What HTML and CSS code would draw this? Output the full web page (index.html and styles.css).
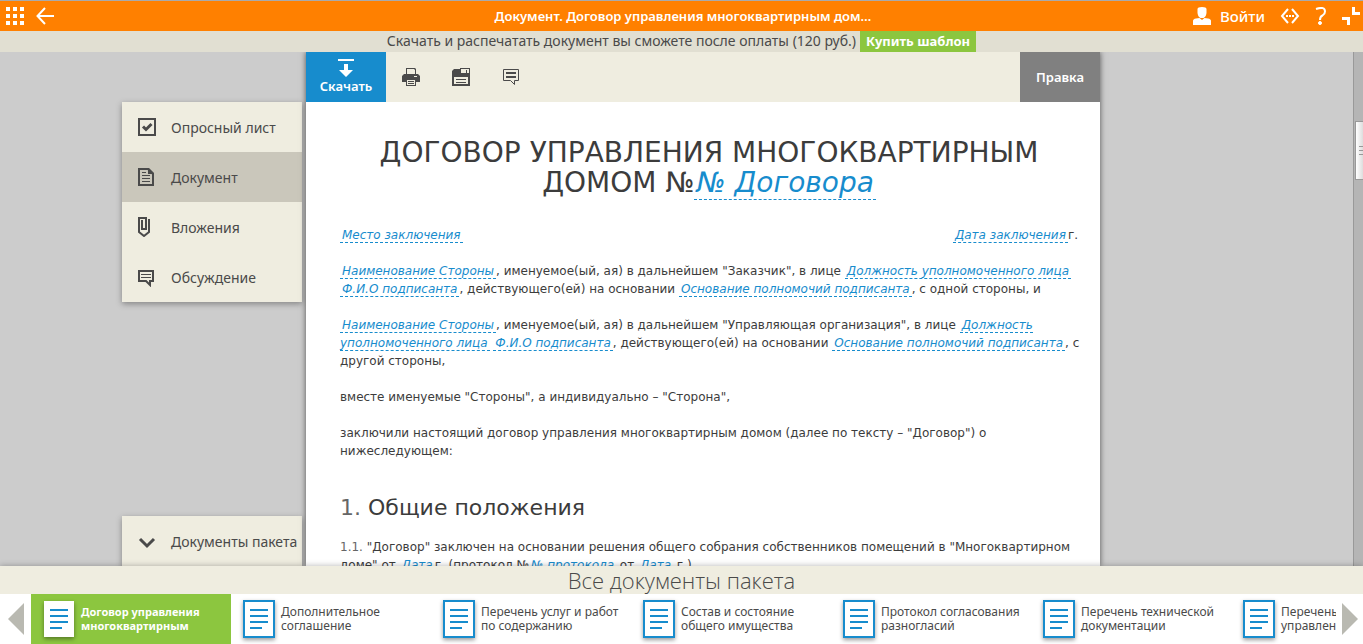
FILE: index.html
```html
<!DOCTYPE html>
<html lang="ru">
<head>
<meta charset="utf-8">
<meta name="viewport" content="width=device-width, initial-scale=1">
<title>Документ. Договор управления многоквартирным домом</title>
<link rel="stylesheet" href="styles.css">
</head>
<body>
<svg class="sprite" aria-hidden="true">
  <symbol id="sheet" viewBox="0 0 32 38">
    <path fill="#fff" stroke="currentColor" stroke-width="2" d="M1 1h30v36H1z"/>
    <path fill="none" stroke="#178ccd" stroke-width="2" d="M7 10h18M7 16h18M7 22h18M7 28h12"/>
  </symbol>
  <symbol id="sheet-plain" viewBox="0 0 32 38">
    <path fill="#fff" d="M1 1h30v36H1z"/>
    <path fill="none" stroke="#178ccd" stroke-width="2" d="M7 10h18M7 16h18M7 22h18M7 28h12"/>
  </symbol>
</svg>

<header class="topbar">
  <div class="topbar-side">
    <button class="icon-btn" type="button" aria-label="Меню">
      <svg width="18" height="18" fill="#fff"><path d="M0 0h4v4H0zM7 0h4v4H7zM14 0h4v4h-4zM0 7h4v4H0zM7 7h4v4H7zM14 7h4v4h-4zM0 14h4v4H0zM7 14h4v4H7zM14 14h4v4h-4z"/></svg>
    </button>
    <button class="icon-btn" type="button" aria-label="Назад">
      <svg width="18" height="18" fill="none" stroke="#fff" stroke-width="2"><path d="M18 9H2M9 1L1.500 9L9 17"/></svg>
    </button>
  </div>
  <h1 class="topbar-title">Документ. Договор управления многоквартирным дом…</h1>
  <div class="topbar-side topbar-right">
    <a class="login" href="#login">
      <svg width="18" height="18" fill="#fff"><path d="M4.500 2Q4.500 0 9 0t4.500 2v4q-.5 4-3 5h-3q-2.500-1-3-5zM0 14q0-2 3-2.500L6.500 11 9 13l2.500-2 3.500.5q3 .5 3 2.500v4H0z"/></svg>
      Войти
    </a>
    <button class="icon-btn" type="button" aria-label="Код">
      <svg width="20" height="18" fill="none" stroke="#fff" stroke-width="2"><path d="M8 2L2 9l6 7M12 2l6 7-6 7"/><path d="M6 9h2M9 9h2M12 9h2"/></svg>
    </button>
    <button class="icon-btn" type="button" aria-label="Помощь">
      <svg width="12" height="18" fill="none" stroke="#fff" stroke-width="2"><path d="M1 2q9-3 9 2.500Q10 7 7.500 8.500 5 9.500 5 13"/><circle cx="5" cy="16" r="1.500" fill="#fff" stroke-width="1"/></svg>
    </button>
    <button class="icon-btn" type="button" aria-label="Свернуть">
      <svg width="18" height="18" fill="#fff"><path d="M10 0h3v5h5v3h-8zM0 10h8v8H5v-5H0z"/></svg>
    </button>
  </div>
</header>

<div class="notice">
  <span>Скачать и распечатать документ вы сможете после оплаты (120 руб.)</span>
  <a class="buy" href="#buy">Купить шаблон</a>
</div>

<main class="workspace">
  <aside class="sidebar">
    <nav class="side-menu">
      <a href="#survey"><svg class="side-icon" viewBox="0 0 18 20" fill="none" stroke="#4a4a4a" stroke-width="2"><path d="M1 2h16v16H1z"/><path stroke-width="3" d="M5 9.500l3 3 5.500-5.500"/></svg>Опросный лист</a>
      <a class="active" href="#document"><svg class="side-icon" viewBox="0 0 18 20" fill="none" stroke="#4a4a4a" stroke-width="2"><path d="M1 2h9l5 5v11H1z"/><path fill="#4a4a4a" stroke="none" d="M10 1h1l5 5v1h-6z"/><path stroke-width="1" d="M4 5.500h4M4 8.500h8M4 11.500h8M4 14.500h8"/></svg>Документ</a>
      <a href="#attachments"><svg class="side-icon" viewBox="0 0 18 20" fill="none" stroke="#4a4a4a" stroke-width="2"><path d="M11 2v13l-5 4-5-4V1h7v11H4V3"/></svg>Вложения</a>
      <a href="#discussion"><svg class="side-icon" viewBox="0 0 18 20" fill="none" stroke="#4a4a4a" stroke-width="2"><path d="M1 4h14v10h-3v4l-4-4H1z"/><path stroke-width="1" d="M3 7.500h10M3 10.500h10"/></svg>Обсуждение</a>
    </nav>
    <button class="package-toggle" type="button"><svg class="side-icon" viewBox="0 0 18 20" fill="none" stroke="#4a4a4a" stroke-width="3"><path d="M2 8l7 7 7-7"/></svg>Документы пакета</button>
  </aside>

  <section class="page">
    <div class="toolbar">
      <button class="download" type="button">
        <svg width="16" height="18" fill="#fff"><path d="M0 0h16v2H0zM6 5h4v6h5l-7 7-7-7h5z"/></svg>
        Скачать
      </button>
      <button class="tool" type="button" aria-label="Печать">
        <svg width="18" height="18" fill="#4a4a4a"><path fill-rule="evenodd" d="M4 0h9l1 1v5h2l2 2v6h-4v4H4v-4H0V8l2-2h2zM5 1v5h8V2l-1-1zM5 12v5h8v-5zM12 8v1h3V8z"/><path d="M6 13h6v1H6zM6 15h6v1H6z"/></svg>
      </button>
      <button class="tool" type="button" aria-label="Сохранить">
        <svg width="18" height="18" fill="#4a4a4a"><path fill-rule="evenodd" d="M2 1h6V0h10v18H0V3zM9 1v4h8V1zM2 9v7h14V9z"/><path d="M14 2h1v3h-1zM4 11h10v1H4zM4 14h10v1H4z"/></svg>
      </button>
      <button class="tool" type="button" aria-label="Комментарий">
        <svg width="16" height="18" fill="none" stroke="#4a4a4a"><path d="M.5 1.500h15v11h-4v4l-4-4h-7z"/><path stroke-width="2" d="M3 5h10M3 9h10"/></svg>
      </button>
      <button class="edit" type="button">Правка</button>
    </div>

    <article class="doc">
      <h2 class="doc-title">ДОГОВОР УПРАВЛЕНИЯ МНОГОКВАРТИРНЫМ ДОМОМ №<a href="#f">№ Договора</a></h2>
      <div class="doc-row"><span><a href="#f">Место заключения</a></span><span><a href="#f">Дата заключения</a>г.</span></div>
      <p><a href="#f">Наименование Стороны</a>, именуемое(ый, ая) в дальнейшем "Заказчик", в лице <a href="#f">Должность уполномоченного лица</a><br><a href="#f">Ф.И.О подписанта</a>, действующего(ей) на основании <a href="#f">Основание полномочий подписанта</a>, с одной стороны, и</p>
      <p><a href="#f">Наименование Стороны</a>, именуемое(ый, ая) в дальнейшем "Управляющая организация", в лице <a href="#f">Должность<br>уполномоченного лица</a> <a href="#f">Ф.И.О подписанта</a>, действующего(ей) на основании <a href="#f">Основание полномочий подписанта</a>, с<br>другой стороны,</p>
      <p>вместе именуемые "Стороны", а индивидуально – "Сторона",</p>
      <p>заключили настоящий договор управления многоквартирным домом (далее по тексту – "Договор") о<br>нижеследующем:</p>
      <h3 class="doc-heading"><span class="num">1.</span> Общие положения</h3>
      <p><span class="num">1.1.</span> "Договор" заключен на основании решения общего собрания собственников помещений в "Многоквартирном<br>доме" от <a href="#f">Дата</a>г. (протокол №<a href="#f">№ протокола</a> от <a href="#f">Дата</a> г.)</p>
    </article>
  </section>

  <div class="rail"><div class="thumb"></div></div>
</main>

<footer class="package">
  <h2 class="package-title">Все документы пакета</h2>
  <div class="carousel">
    <button class="arrow" type="button" aria-label="Предыдущие"><svg width="16" height="32" fill="#b9b9b1"><path d="M16 0v32L0 16z"/></svg></button>
    <div class="cards">
      <a class="card current" href="#d1"><svg class="sheet"><use href="#sheet-plain"/></svg><span>Договор управления<br>многоквартирным</span></a>
      <a class="card" href="#d2"><svg class="sheet"><use href="#sheet"/></svg><span>Дополнительное<br>соглашение</span></a>
      <a class="card" href="#d3"><svg class="sheet"><use href="#sheet"/></svg><span>Перечень услуг и работ<br>по содержанию</span></a>
      <a class="card" href="#d4"><svg class="sheet"><use href="#sheet"/></svg><span>Состав и состояние<br>общего имущества</span></a>
      <a class="card" href="#d5"><svg class="sheet"><use href="#sheet"/></svg><span>Протокол согласования<br>разногласий</span></a>
      <a class="card" href="#d6"><svg class="sheet"><use href="#sheet"/></svg><span>Перечень технической<br>документации</span></a>
      <a class="card" href="#d7"><svg class="sheet"><use href="#sheet"/></svg><span>Перечень<br>управления</span></a>
    </div>
    <button class="arrow" type="button" aria-label="Следующие"><svg width="16" height="32" fill="#b9b9b1"><path d="M0 0v32l16-16z"/></svg></button>
  </div>
</footer>
</body>
</html>
```
FILE: styles.css
```css
* { box-sizing: border-box; }

body {
  margin: 0;
  height: 100vh;
  display: flex;
  flex-direction: column;
  overflow: hidden;
  background: #ccc;
  color: #4a4a4a;
  font-family: "Noto Sans", "Open Sans", sans-serif;
  font-size: 14px;
}

h1, h2, h3, p { margin: 0; font-weight: 400; }
a { color: inherit; text-decoration: none; }
button {
  margin: 0;
  padding: 0;
  border: 0;
  background: none;
  color: inherit;
  font: inherit;
  cursor: pointer;
}
svg { display: block; flex: none; }
.sprite { position: absolute; width: 0; height: 0; }

.topbar {
  flex: none;
  display: grid;
  grid-template-columns: 1fr auto 1fr;
  align-items: center;
  height: 31px;
  padding: 0 3px 0 6px;
  border-top: 1px solid #aaa;
  background: #ff8000;
  color: #fff;
}
.topbar-side { display: flex; align-items: center; gap: 12px; }
.topbar-right { justify-content: flex-end; gap: 15px; }
.topbar-title { font-size: 13px; font-weight: 600; }
.login { display: flex; align-items: center; gap: 9px; font-size: 15px; font-weight: 500; }

.notice {
  flex: none;
  display: flex;
  justify-content: center;
  gap: 4px;
  height: 21px;
  background: #e1dfd2;
  line-height: 20px;
}
.buy { padding: 0 6px; background: #8cc63f; color: #fff; font-size: 13px; font-weight: 700; }

.workspace {
  flex: 1;
  min-height: 0;
  display: grid;
  grid-template-columns: minmax(0, 122fr) 180px 4px minmax(0, 794px) minmax(0, 253fr) 10px;
  grid-template-rows: minmax(0, 1fr);
  overflow: hidden;
}

.sidebar {
  grid-column: 2;
  display: flex;
  flex-direction: column;
  justify-content: space-between;
  padding-top: 50px;
}
.side-menu, .package-toggle { background: #efede0; box-shadow: 0 2px 6px rgba(0, 0, 0, .35); }
.side-menu a, .package-toggle {
  display: flex;
  align-items: center;
  gap: 15px;
  width: 100%;
  height: 50px;
  padding-left: 16px;
  white-space: nowrap;
}
.side-menu .active { background: #cac7bb; }
.side-icon { width: 18px; height: 20px; }

.page {
  grid-column: 4;
  background: #fff;
  box-shadow: 0 0 6px rgba(0, 0, 0, .6);
}
.toolbar { display: flex; height: 50px; background: #efede0; }
.download {
  display: flex;
  flex-direction: column;
  align-items: center;
  justify-content: center;
  width: 80px;
  background: #178ccd;
  color: #fff;
  font-size: 13px;
  font-weight: 600;
  line-height: 18px;
}
.tool { display: flex; align-items: center; justify-content: center; width: 50px; }
.edit { width: 80px; margin-left: auto; background: #808080; color: #fff; font-size: 13px; font-weight: 600; }

.doc {
  padding: 36px 22px 0 34px;
  color: #3c3c3c;
  font-family: "DejaVu Sans", sans-serif;
  font-size: 12px;
  line-height: 18px;
  white-space: nowrap;
}
.doc p { margin-bottom: 18px; }
.doc a { padding: 0 2px; border-bottom: 1px dashed #178ccd; color: #178ccd; font-style: italic; }
.doc-title {
  margin-bottom: 28px;
  font-size: 28px;
  line-height: 30px;
  text-align: center;
  white-space: normal;
}
.doc-row { display: flex; justify-content: space-between; margin-bottom: 18px; }
.doc-heading { margin: 36px 0 18px; font-size: 22px; line-height: 24px; }
.num { color: #666; }

.rail { grid-column: 6; border-left: 1px solid #999; background: #b5b5b5; padding: 69px 0 0 1px; }
.thumb {
  height: 59px;
  border: 1px solid #999;
  border-right: 0;
  background:
    repeating-linear-gradient(#999 0 1px, transparent 1px 4px) right 24px / 4px 10px no-repeat,
    linear-gradient(90deg, #fff, #ddd);
}

.package {
  position: relative;
  flex: none;
  background: #fff;
  box-shadow: 0 0 6px rgba(0, 0, 0, .3);
}
.package-title {
  height: 28px;
  background: #efede0;
  font-family: "Open Sans", "Noto Sans", sans-serif;
  font-size: 22px;
  font-weight: 300;
  line-height: 28px;
  text-align: center;
}
.carousel { display: flex; height: 50px; }
.arrow { display: flex; align-items: center; justify-content: center; flex: none; width: 27px; }
.arrow:first-child { width: 31px; }
.cards { flex: 1; min-width: 0; display: flex; overflow: hidden; }
.card {
  flex: none;
  display: flex;
  align-items: center;
  gap: 6px;
  width: 200px;
  padding-left: 12px;
  font-size: 12px;
  line-height: 14px;
  white-space: nowrap;
}
.sheet { width: 32px; height: 38px; color: #178ccd; filter: drop-shadow(0 2px 2px rgba(0, 0, 0, .4)); }
.current { background: #8cc63f; color: #fff; font-size: 11px; font-weight: 700; }
```
